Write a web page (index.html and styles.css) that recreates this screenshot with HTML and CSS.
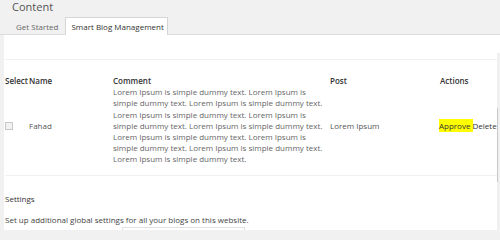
FILE: index.html
```html
<!DOCTYPE html>
<html>
<head>
<meta charset="utf-8">
<link rel="stylesheet" href="styles.css">
</head>
<body>
<div class="page">
  <h1 class="title">Content</h1>
  <div class="tabs">
    <span class="tab">Get Started</span>
    <span class="tab active">Smart Blog Management</span>
  </div>
  <div class="panel">
    <div class="spacer"></div>
    <div class="grid">
      <div class="th">Select</div>
      <div class="th">Name</div>
      <div class="th">Comment</div>
      <div class="th">Post</div>
      <div class="th">Actions</div>
      <div class="td"><span class="check"></span></div>
      <div class="td">Fahad</div>
      <div class="td comment">Lorem Ipsum is simple dummy text. Lorem Ipsum is simple dummy text. Lorem Ipsum is simple dummy text. Lorem Ipsum is simple dummy text. Lorem Ipsum is simple dummy text. Lorem Ipsum is simple dummy text. Lorem Ipsum is simple dummy text. Lorem Ipsum is simple dummy text. Lorem Ipsum is simple dummy text. Lorem Ipsum is simple dummy text.</div>
      <div class="td">Lorem Ipsum</div>
      <div class="td actions"><span class="approve">Approve </span>Delete</div>
    </div>
    <div class="settings">
      <h2 class="settings-title">Settings</h2>
      <p class="settings-desc">Set up additional global settings for all your blogs on this website.</p>
      <div class="field"></div>
    </div>
  </div>
  <div class="scroller"><div class="thumb"></div></div>
</div>
</body>
</html>
```
FILE: styles.css
```css
html, body {
  margin: 0;
  padding: 0;
  background: #f1f1f1;
  font-family: "Open Sans", "Noto Sans", sans-serif;
  color: #555;
  overflow: hidden;
}
.page {
  position: relative;
  width: 500px;
  height: 230px;
}
.title {
  margin: 0;
  padding-left: 12px;
  height: 17px;
  font-size: 11px;
  font-weight: 400;
  line-height: 13px;
  color: #555;
}
.tabs {
  display: flex;
  align-items: flex-end;
  height: 18px;
  border-bottom: 1px solid #dcdcdc;
  box-sizing: border-box;
  padding-left: 16px;
  gap: 7px;
}
.tab {
  font-size: 8px;
  line-height: 11px;
  padding-bottom: 2px;
  color: #666;
}
.tab.active {
  background: #fff;
  border: 1px solid #d6d6d6;
  border-bottom: none;
  padding: 3px 3px 3px 5px;
  margin-bottom: -1px;
  color: #333;
}
.panel {
  background: #fff;
  margin-left: 4px;
  height: 196px;
  box-sizing: border-box;
  padding-left: 1px;
}
.spacer {
  height: 24px;
  border-bottom: 1px solid #f2f2f2;
}
.grid {
  display: grid;
  grid-template-columns: 24px 84px 217px 110px 1fr;
  padding-top: 15px;
  padding-bottom: 10px;
  border-bottom: 1px solid #f2f2f2;
  font-size: 8px;
  line-height: 11.2px;
}
.th {
  font-weight: 600;
  color: #333;
}
.td {
  align-self: center;
  color: #555;
}
.comment {
  padding-right: 6px;
  color: #666;
}
.check {
  display: block;
  width: 6px;
  height: 6px;
  border: 1px solid #c8c8c8;
  background: #f2f2f2;
  margin-top: 1px;
}
.actions {
  white-space: nowrap;
  color: #333;
  margin-left: -1px;
}
.approve {
  background: #ffff00;
  padding: 1px 0;
}
.settings {
  padding-top: 17px;
}
.settings-title {
  margin: 0;
  font-size: 8px;
  font-weight: 400;
  line-height: 12px;
  color: #333;
}
.settings-desc {
  margin: 9px 0 0;
  font-size: 8px;
  line-height: 11px;
  color: #444;
}
.field {
  margin: 2px 0 0 117px;
  width: 121px;
  height: 12px;
  border: 1px solid #e2e2e2;
}
.scroller {
  position: absolute;
  right: 0;
  top: 53px;
  bottom: 0;
  width: 3px;
  background: #f0f0f0;
}
.thumb {
  margin-top: 55px;
  height: 74px;
  border-left: 1px solid #c8c8c8;
}
```
